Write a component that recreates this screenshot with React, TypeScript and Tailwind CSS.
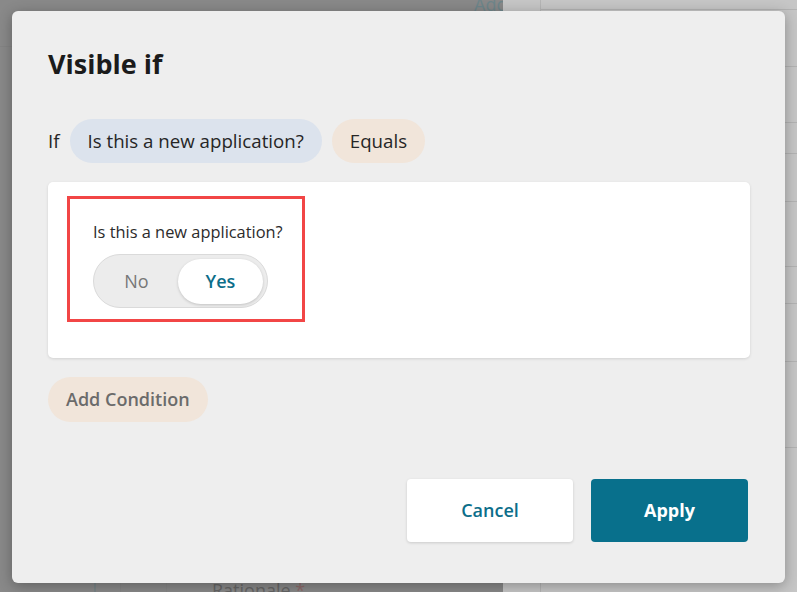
import React from "react";

const rightRows = [10, 57, 56, 31, 48, 65, 37, 58, 86];

function Backdrop() {
  return (
    <div className="flex h-[592px] w-[797px] overflow-hidden">
      <div className="flex w-[503px] flex-col bg-[#898989]">
        <div className="h-[47px] border-b border-[#848484]">
          <div className="-mt-[9px] ml-[474px] text-[18px] text-[#6e868b]">Add</div>
        </div>
        <div className="flex-1" />
        <div className="flex h-[9px] items-start">
          <div className="ml-[94px] h-full w-[2px] bg-[#7a8486]" />
          <div className="ml-[24px] h-full w-px bg-[#858585]" />
          <div className="ml-[45px] h-full w-px bg-[#858585]" />
          <div className="-mt-[5px] ml-[45px] text-[18px] leading-[24px] text-[#666]">
            Rationale <span className="text-[#8d6b6b]">*</span>
          </div>
        </div>
      </div>
      <div className="flex-1 bg-[#c6c6c6]">
        <div className="ml-[37px] h-full border-l border-[#b5b5b5]">
          {rightRows.map((h, i) => (
            <div key={i} className="border-b border-[#b3b3b3]" style={{ height: h }} />
          ))}
        </div>
      </div>
    </div>
  );
}

function YesNoToggle() {
  return (
    <div className="flex h-[54px] w-[175px] items-center rounded-full border border-[#dadada] bg-[#ececec] p-[4px]">
      <div className="flex flex-1 justify-center pr-[3px] text-[18px] text-[#777]">No</div>
      <div className="flex h-[45px] w-[85px] items-center justify-center rounded-full bg-white text-[18px] font-semibold text-[#0c6e8a] shadow-[0_1px_3px_rgba(0,0,0,0.18)]">
        Yes
      </div>
    </div>
  );
}

export default function App() {
  return (
    <div className="relative h-[592px] w-[797px] overflow-hidden font-['Open_Sans',sans-serif]">
      <Backdrop />
      <div className="absolute left-[12px] top-[11px] flex h-[572px] w-[773px] flex-col rounded-[6px] bg-[#eeeeee] pl-[36px] pr-[35px] shadow-[0_3px_14px_rgba(0,0,0,0.3)]">
        <h2 className="mt-[34px] text-[27px] font-bold leading-[38px] text-[#1b1b1b]">Visible if</h2>

        <div className="mt-[36px] flex items-center gap-[10px] text-[18.7px] text-[#262626]">
          <span>If</span>
          <span className="flex h-[44px] items-center rounded-full bg-[#dce3ed] px-[18px]">
            Is this a new application?
          </span>
          <span className="flex h-[44px] items-center rounded-full bg-[#f1e5da] px-[18px]">Equals</span>
        </div>

        <div className="mt-[19px] h-[176px] rounded-[5px] bg-white pl-[19px] pt-[14px] shadow-[0_1px_3px_rgba(0,0,0,0.12)]">
          <div className="h-[126px] w-[238px] border-[3px] border-[#f24646] pl-[23px] pt-[23px]">
            <div className="text-[16.4px] leading-[20px] text-[#2b2b2b]">Is this a new application?</div>
            <div className="mt-[12px]">
              <YesNoToggle />
            </div>
          </div>
        </div>

        <div className="mt-[19px] flex">
          <button className="flex h-[45px] items-center rounded-full bg-[#f1e5da] px-[18px] text-[18px] font-semibold text-[#6b6b6b]">
            Add Condition
          </button>
        </div>

        <div className="mt-[57px] flex justify-end gap-[18px] pr-[2px]">
          <button className="h-[63px] w-[166px] rounded-[4px] bg-white text-[18px] font-semibold text-[#0c6e8a] shadow-[0_1px_3px_rgba(0,0,0,0.15)]">
            Cancel
          </button>
          <button className="h-[63px] w-[157px] rounded-[4px] bg-[#08708c] text-[18px] font-bold text-white">
            Apply
          </button>
        </div>
      </div>
    </div>
  );
}
